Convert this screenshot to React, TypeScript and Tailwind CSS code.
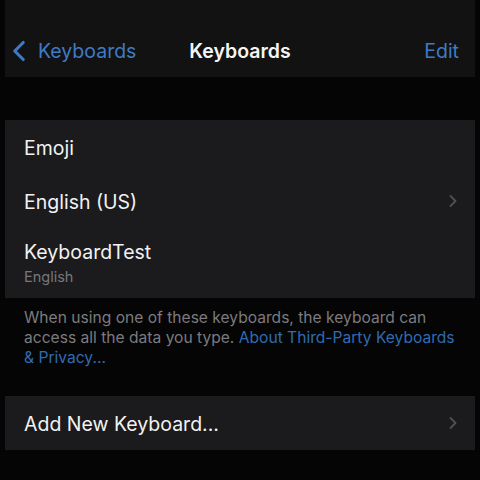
import { ChevronLeft, ChevronRight } from 'lucide-react'

const font = { fontFamily: 'Inter, "Noto Sans", sans-serif' }

function Row({ title, sub, chevron, tall }: { title: string; sub?: string; chevron?: boolean; tall?: boolean }) {
  return (
    <div className={`flex items-center justify-between pl-[19px] pr-[12px] ${tall ? 'h-[70px]' : 'h-[54px]'}`}>
      <div className={`flex flex-col ${tall ? '' : 'pt-[1px]'}`}>
        <span className="text-[19.5px] leading-[24px] text-[#f2f2f2]">{title}</span>
        {sub && <span className="text-[14.5px] leading-[18px] text-[#77777b] mt-[4px]">{sub}</span>}
      </div>
      {chevron && <ChevronRight size={20} strokeWidth={2.2} className="text-[#505054]" />}
    </div>
  )
}

export default function App() {
  return (
    <div className="w-[480px] h-[480px] bg-[#050505] overflow-hidden" style={font}>
      {/* nav */}
      <div className="mx-[5px] h-[77px] bg-[#121212] flex items-end pb-[14px] px-[9px] relative">
        <div className="flex items-center h-[24px] text-[#3f7bc4]">
          <ChevronLeft size={34} strokeWidth={2.2} className="-ml-[12px] shrink-0" />
          <span className="text-[19.5px] leading-[24px] ml-[2px]">Keyboards</span>
        </div>
        <span className="absolute left-0 right-0 bottom-[14px] text-center text-[19.5px] leading-[24px] font-semibold text-[#f5f5f5] pointer-events-none">
          Keyboards
        </span>
        <span className="ml-auto mr-[7px] text-[19.5px] leading-[24px] text-[#3f7bc4]">Edit</span>
      </div>

      <div className="h-[43px]" />

      {/* keyboards list */}
      <div className="mx-[5px] bg-[#1b1b1d]">
        <Row title="Emoji" />
        <Row title="English (US)" chevron />
        <Row title="KeyboardTest" sub="English" tall />
      </div>

      <p className="pl-[24px] pr-[20px] pt-[10px] text-[15.6px] leading-[20px] text-[#7b7b7f]">
        When using one of these keyboards, the keyboard can access all the data you type.{' '}
        <span className="text-[#2f6cb3]">About Third-Party Keyboards &amp; Privacy...</span>
      </p>

      <div className="h-[28px]" />

      <div className="mx-[5px] bg-[#1b1b1d]">
        <Row title="Add New Keyboard..." chevron />
      </div>
    </div>
  )
}
